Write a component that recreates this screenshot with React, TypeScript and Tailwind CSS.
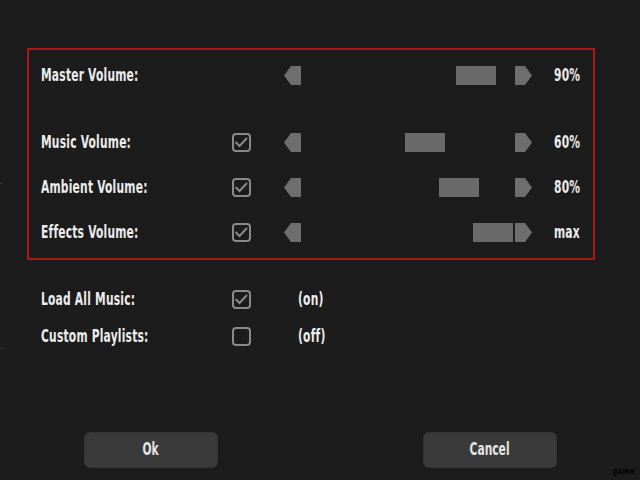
import { memo, type ReactNode } from 'react';

/**
 * Audio options dialog
 * Volume sliders in a red framed group, toggles below, Ok / Cancel footer
 */

interface SliderRowProps {
    label: string;
    value: number;
    display: string;
    toggle?: boolean;
}

interface ToggleRowProps {
    label: string;
    checked: boolean;
    state: string;
}

const FONT = { fontFamily: '"DejaVu Sans Condensed", "Liberation Sans", sans-serif' };

// the game font is very narrow; squeeze the condensed face horizontally
const Narrow = ({ children, className = '' }: { children: ReactNode; className?: string }) => (
    <span className={`inline-block origin-left scale-x-[0.7] whitespace-nowrap text-[17px] font-bold tracking-[0.3px] text-[#ececec] ${className}`}>
        {children}
    </span>
);

const Checkbox = memo(({ checked }: { checked: boolean }) => (
    <div className="w-[19px] h-[19px] rounded-[4px] border-2 border-[#8a8a8a] flex items-center justify-center">
        {checked && (
            <svg width="15" height="15" viewBox="0 0 15 15">
                <polyline points="1.5,7 5.5,11 13,3" fill="none" stroke="#8a8a8a" strokeWidth="2" />
            </svg>
        )}
    </div>
));

Checkbox.displayName = 'Checkbox';

const ArrowLeft = () => (
    <svg width="17" height="19" viewBox="0 0 17 19" className="shrink-0">
        <polygon points="0,9.5 7,0 17,0 17,19 7,19" fill="#6e6e6e" />
    </svg>
);

const ArrowRight = () => (
    <svg width="17" height="19" viewBox="0 0 17 19" className="shrink-0">
        <polygon points="0,0 10,0 17,9.5 10,19 0,19" fill="#6e6e6e" />
    </svg>
);

const SliderRow = memo(({ label, value, display, toggle }: SliderRowProps) => (
    <div className="flex items-center h-[19px]">
        <div className="w-[191px]">
            <Narrow>{label}</Narrow>
        </div>
        <div className="w-[19px]">{toggle && <Checkbox checked />}</div>
        <div className="ml-[33px] flex items-center">
            <ArrowLeft />
            {/* track: thumb offset taken from the value */}
            <div className="w-[214px] h-[19px]">
                <div className="w-[40px] h-[19px] bg-[#6a6a6a]" style={{ marginLeft: 2 + value * 1.7 }} />
            </div>
            <ArrowRight />
        </div>
        <div className="ml-[22px]">
            <Narrow>{display}</Narrow>
        </div>
    </div>
));

SliderRow.displayName = 'SliderRow';

const ToggleRow = memo(({ label, checked, state }: ToggleRowProps) => (
    <div className="flex items-center h-[19px]">
        <div className="w-[191px]">
            <Narrow>{label}</Narrow>
        </div>
        <Checkbox checked={checked} />
        <div className="ml-[47px]">
            <Narrow>{state}</Narrow>
        </div>
    </div>
));

ToggleRow.displayName = 'ToggleRow';

const DialogButton = ({ label }: { label: string }) => (
    <button
        type="button"
        className="w-[134px] h-[36px] rounded-[6px] bg-[#3a3a3a] border border-[#333] flex items-center justify-center"
    >
        <span className="inline-block scale-x-[0.7] text-[17px] font-bold text-[#e4e4e4]">{label}</span>
    </button>
);

export default function App() {
    return (
        <div className="w-[640px] h-[480px] bg-[#1c1c1c] relative overflow-hidden flex flex-col" style={FONT}>
            {/* stray marks on the left edge */}
            <span className="absolute left-0 top-[178px] text-[9px] text-[#777]">·</span>
            <span className="absolute left-0 top-[343px] text-[9px] text-[#777]">·</span>

            <div className="ml-[27px] mt-[48px] w-[568px] h-[212px] border-2 border-[#a8181c] pt-[16px] pl-[12px] flex flex-col">
                <SliderRow label="Master Volume:" value={90} display="90%" />
                <div className="mt-[48px] flex flex-col gap-[26px]">
                    <SliderRow label="Music Volume:" value={60} display="60%" toggle />
                    <SliderRow label="Ambient Volume:" value={80} display="80%" toggle />
                    <SliderRow label="Effects Volume:" value={100} display="max" toggle />
                </div>
            </div>

            <div className="ml-[41px] mt-[30px] flex flex-col gap-[18px]">
                <ToggleRow label="Load All Music:" checked state="(on)" />
                <ToggleRow label="Custom Playlists:" checked={false} state="(off)" />
            </div>

            <div className="mt-auto mb-[12px] flex justify-between pl-[84px] pr-[83px]">
                <DialogButton label="Ok" />
                <DialogButton label="Cancel" />
            </div>

            <span className="absolute right-[5px] bottom-[4px] text-[8px] leading-none font-bold text-[#050505]">game</span>
        </div>
    );
}
